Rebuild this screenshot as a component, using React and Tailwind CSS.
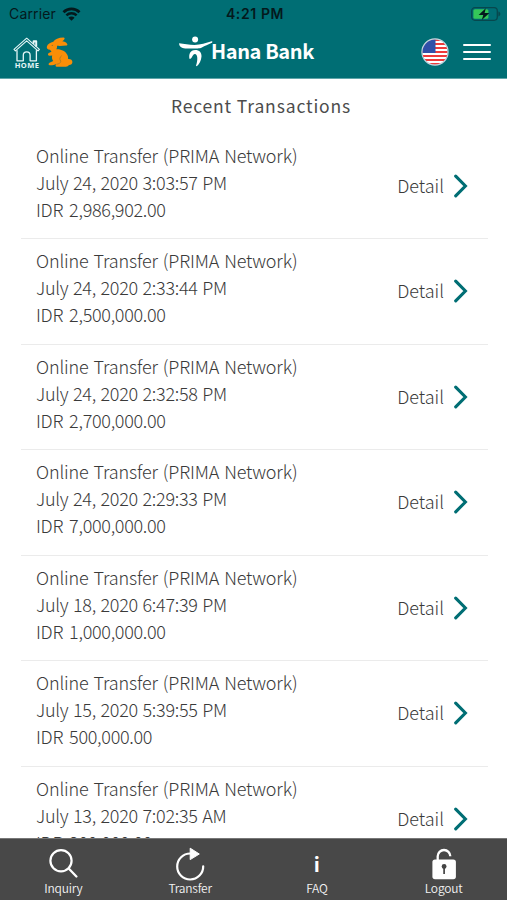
import React from 'react';

const transactions = [
  { id: 1, date: 'July 24, 2020 3:03:57 PM', amount: 'IDR 2,986,902.00' },
  { id: 2, date: 'July 24, 2020 2:33:44 PM', amount: 'IDR 2,500,000.00' },
  { id: 3, date: 'July 24, 2020 2:32:58 PM', amount: 'IDR 2,700,000.00' },
  { id: 4, date: 'July 24, 2020 2:29:33 PM', amount: 'IDR 7,000,000.00' },
  { id: 5, date: 'July 18, 2020 6:47:39 PM', amount: 'IDR 1,000,000.00' },
  { id: 6, date: 'July 15, 2020 5:39:55 PM', amount: 'IDR 500,000.00' },
  { id: 7, date: 'July 13, 2020 7:02:35 AM', amount: 'IDR 300,000.00' },
];

const WifiIcon = () => (
  <svg width="19" height="14" viewBox="0 0 18 14">
    <path d="M1 5.2a11.5 11.5 0 0 1 16 0" fill="none" stroke="#04191c" strokeWidth="2.8" />
    <path d="M3.9 8.3a7.3 7.3 0 0 1 10.2 0" fill="none" stroke="#04191c" strokeWidth="2.5" />
    <path d="M9 13.8 5.9 10.7a4.4 4.4 0 0 1 6.2 0z" fill="#04191c" />
  </svg>
);

const BatteryIcon = () => (
  <svg width="30" height="14" viewBox="0 0 30 14">
    <rect x="0.7" y="0.7" width="25.6" height="12.6" rx="3.2" fill="none" stroke="#07474d" strokeWidth="1.3" />
    <rect x="2.4" y="2.2" width="15" height="9.6" rx="1.6" fill="#34c759" />
    <path d="M27.4 4.6c1.2.3 1.9 1.3 1.9 2.4s-.7 2.1-1.9 2.4z" fill="#07474d" />
    <path d="M14.8 1.2 7.6 8h4.7l-1.5 5L18.4 6h-4.8z" fill="#04191c" />
  </svg>
);

const HomeIcon = () => (
  <svg width="28" height="25" viewBox="0 0 28 25" fill="none" stroke="#e6f7f8" strokeLinejoin="round" strokeLinecap="round">
    <path d="M1 12.3 13.7 1.2l12.7 11.1-1.4 1.5L13.7 3.9 2.4 13.8z" strokeWidth="1.1" />
    <path d="M20.6 6V4.2h2.6V9" strokeWidth="2" />
    <path d="M4 13.6v10.2h6.3v-5.6a3.4 3.4 0 0 1 6.8 0v5.6h6.3V13.6" strokeWidth="1.3" />
  </svg>
);

const RabbitIcon = () => (
  <svg width="27" height="31" viewBox="0 0 27 31">
    <path
      d="M.9 9.5C1.5 7.2 4.5 5.6 7.3 4.8 8.8 2 12.5.6 17.5.5c1.2 0 1.5 1 .7 2-.5.7-1.2 1.3-2 1.8 2 0 4 1 5 2.6.5.9 0 1.5-.9 1.6-3 .3-6.3.6-9.3.3.2 1.4-.1 2.5-.7 3.4 4.6-.4 9.4 1.9 11 5.6.8 1.7.9 3 .8 4.2 2.6-.2 4.3 1 4.3 3s-1.5 3.1-3.5 3c-.7 1-1.6 1.7-3 1.7h-9.1c-1.3 0-1.6-1.3-.8-2.2l.5-.6c-1.9.9-4.3 1.4-6.7 1.3-1.6-.1-1.6-1.8-.3-2.5l3.7-1.7c-1.2-1.5-1.5-3.5-1-5.5l-2.4.3c-1.9.1-2.5-1.9-1-2.7l2.7-1.3-1.5-2C1.5 12.5.4 11.2.9 9.5z"
      fill="#f98e08"
    />
    <path d="M10.5 27.2c2.5-.1 4.1-1.2 4.3-3-1.5-1.8-1.2-4.2.9-5.5" fill="none" stroke="#a87b28" strokeWidth="0.9" />
    <circle cx="6.3" cy="8.4" r="0.6" fill="#8a7330" />
  </svg>
);

const HanaLogo = () => (
  <svg width="34" height="31" viewBox="0 0 34 31" fill="#fff">
    <circle cx="16.1" cy="3.4" r="3" />
    <path d="M.1 7.2C5 7.500 10 8.900 15.500 9c6 0 11.500-2.300 17.200-3.700.9-.1 1 .900.200 1.500-3.600 2-7.200 3.200-10 4.700-1.300.700-2.500.900-4.200.900-4.500 0-8.200.500-12.500 0C2.700 11.900.1 10.500.1 7.200z" />
    <path d="M10.600 23c-1.200-4.600.6-9 5.600-9.100 4.200 0 6.600 2.600 6.300 6.600-.3 4.200-2.300 7.800-4.700 9.700l-.8-.4c1.200-3.200 1.500-6.200 1.200-8.700-.2-1.900-.9-3.200-2.300-3.200-2.600 0-2.300 4.300-5.300 5.100z" />
  </svg>
);

const FlagIcon = () => (
  <svg width="28" height="28" viewBox="0 0 28 28">
    <defs>
      <clipPath id="flag">
        <circle cx="14" cy="14" r="12.7" />
      </clipPath>
    </defs>
    <g clipPath="url(#flag)">
      <rect width="28" height="28" fill="#fff" />
      {[1, 5, 9, 13, 17, 21, 25].map((y) => (
        <rect key={y} y={y} width="28" height="2" fill="#ee3b3b" />
      ))}
      <rect width="14.5" height="15" fill="#3050a8" />
    </g>
    <circle cx="14" cy="14" r="13.1" fill="none" stroke="#c4d5df" strokeWidth="1.1" />
  </svg>
);

const Chevron = () => (
  <svg width="14" height="24" viewBox="0 0 14 24" fill="none">
    <path d="M1.7 2.2 11.4 12 1.7 21.8" stroke="#006e74" strokeWidth="3.1" strokeLinecap="round" />
  </svg>
);

const SearchIcon = () => (
  <svg width="30" height="32" viewBox="0 0 30 32" fill="none" stroke="#fff" strokeLinecap="round">
    <circle cx="13" cy="12.8" r="10.6" strokeWidth="2.2" />
    <path d="m20.700 20.500 7.700 8" strokeWidth="2.3" />
  </svg>
);

const TransferIcon = () => (
  <svg width="30" height="34" viewBox="0 0 30 34">
    <path d="M28.2 19.3a13 13 0 1 1-12.800-12.800" fill="none" stroke="#fff" strokeWidth="2.2" strokeLinecap="round" />
    <path d="M15.2 1.2 24.3 7l-9.100 5.600z" fill="#fff" stroke="#fff" strokeWidth="1" strokeLinejoin="round" />
  </svg>
);

const LockIcon = () => (
  <svg width="26" height="32" viewBox="0 0 26 32">
    <path d="M6.7 12V8.3a6.3 6.3 0 0 1 12.6 0" fill="none" stroke="#fff" strokeWidth="2.3" />
    <rect x="1.4" y="11.5" width="23.5" height="19.7" rx="2.6" fill="#fff" />
    <circle cx="13.1" cy="18.5" r="2.4" fill="#444" />
    <path d="M13.1 19v7" stroke="#444" strokeWidth="1.7" />
  </svg>
);

const TransactionRow = ({ date, amount }) => (
  <div className="flex h-[105.5px] shrink-0 justify-between border-b border-[#ebebeb] pt-[8px] pr-[20px] pl-[15px] text-[18px] leading-[27px] font-light whitespace-nowrap text-[#3a3a3a]">
    <div>
      <p className="tracking-[-0.16px] [word-spacing:1.2px]">Online Transfer (PRIMA Network)</p>
      <p className="tracking-[-0.28px] [word-spacing:0.9px]">{date}</p>
      <p className="tracking-[-0.3px] [word-spacing:2.4px]">{amount}</p>
    </div>
    <div className="flex h-[88px] items-center gap-[10px]">
      <span className="pb-[1px]">Detail</span>
      <Chevron />
    </div>
  </div>
);

const TabItem = ({ label, children }) => (
  <div className="flex flex-1 flex-col items-center pt-[8px]">
    <div className="flex h-[33px] items-center justify-center">{children}</div>
    <span className="text-[12px] leading-[16px] font-[350] tracking-[-0.2px] text-[#f2f2f2]">{label}</span>
  </div>
);

export default function App() {
  return (
    <div className="flex h-[900px] w-[507px] flex-col overflow-hidden bg-white font-['Noto_Sans_CJK_KR','Noto_Sans',sans-serif]">
      <header className="h-[79px] shrink-0 border-b border-[#5fa5a9] bg-[#006e74]">
        <div className="grid h-[27px] grid-cols-3 items-center pr-[6px] pl-[9px] font-['Inter',sans-serif] text-[14px] text-[#04191c]">
          <div className="flex items-center gap-[6px]">
            <span className="tracking-[0.15px]">Carrier</span>
            <WifiIcon />
          </div>
          <span className="text-center font-semibold tracking-[0.6px]">4:21 PM</span>
          <div className="flex justify-end">
            <BatteryIcon />
          </div>
        </div>
        <div className="flex h-[50px] items-center pr-[16px] pl-[13px]">
          <div className="flex w-[166px] items-center gap-[5px]">
            <div className="flex flex-col items-center pt-[1px]">
              <HomeIcon />
              <span className="font-['Open_Sans',sans-serif] text-[7.5px] leading-[7px] font-bold tracking-[0.4px] text-[#e6f7f8]">HOME</span>
            </div>
            <RabbitIcon />
          </div>
          <div className="flex items-center pb-[2px]">
            <HanaLogo />
            <span className="-ml-[2px] text-[20px] leading-[28px] font-bold tracking-[-0.4px] text-white">Hana Bank</span>
          </div>
          <div className="flex flex-1 items-center justify-end gap-[14px]">
            <FlagIcon />
            <div className="flex w-[28px] flex-col gap-[4.5px]">
              <div className="h-[2.5px] rounded-full bg-white"></div>
              <div className="h-[2.5px] rounded-full bg-white"></div>
              <div className="h-[2.5px] rounded-full bg-white"></div>
            </div>
          </div>
        </div>
      </header>

      <main className="flex min-h-0 flex-1 flex-col overflow-hidden pr-[19px] pl-[21px]">
        <h1 className="h-[54.5px] shrink-0 pl-[13px] text-center text-[17.5px] leading-[53px] tracking-[0.85px] text-[#4c4c4c]">
          Recent Transactions
        </h1>
        {transactions.map((item) => (
          <TransactionRow key={item.id} date={item.date} amount={item.amount} />
        ))}
      </main>

      <nav className="flex h-[62px] shrink-0 border-t border-[#777] bg-[#484848]">
        <TabItem label="Inquiry">
          <SearchIcon />
        </TabItem>
        <TabItem label="Transfer">
          <TransferIcon />
        </TabItem>
        <TabItem label="FAQ">
          <span className="text-[20px] leading-[30px] font-bold text-white">i</span>
        </TabItem>
        <TabItem label="Logout">
          <LockIcon />
        </TabItem>
      </nav>
    </div>
  );
}
